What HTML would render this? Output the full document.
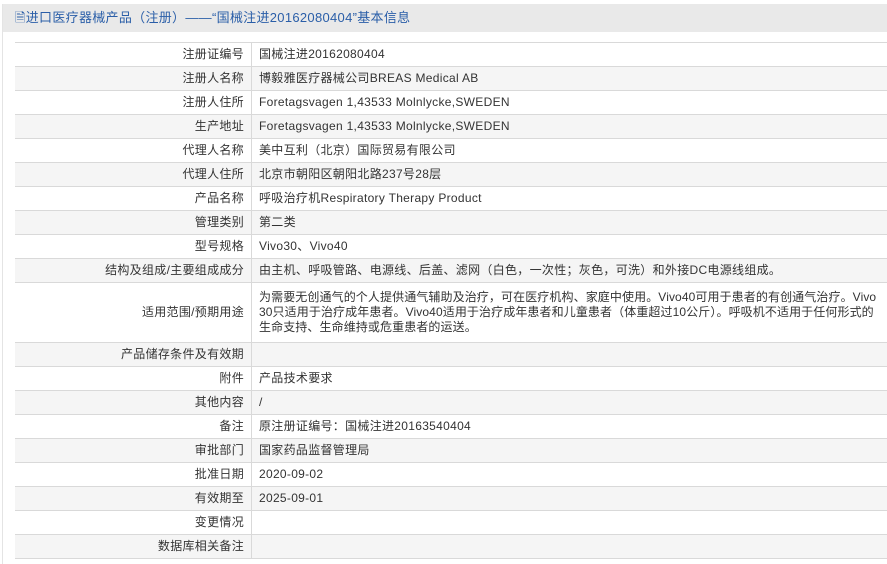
<!DOCTYPE html>
<html><head><meta charset="utf-8"><style>
body{margin:0;width:887px;height:558px;overflow:hidden;background:#fff;font-family:"Liberation Sans","Noto Sans CJK SC",sans-serif;font-size:12px;color:#333;letter-spacing:.3px}
.wrap{position:absolute;left:2px;top:4px;width:885px;height:560px;border-left:1px solid #e4e4e4;}
.hd{height:28px;background:#e9e9e9;line-height:28px;padding-left:12px;color:#2a5ea8;font-size:13px}
table{position:absolute;left:12px;top:38px;width:873px;border-collapse:collapse;table-layout:fixed}
td{border-top:1px solid #d9d9d9;border-bottom:1px solid #d9d9d9;height:23px;padding:0 7px;line-height:15px;white-space:nowrap;overflow:hidden}
td.l{width:222px;text-align:right;border-right:1px solid #d9d9d9}
tr:nth-child(even) td{background:#f5f5f5}
.t{letter-spacing:.1px}
</style></head><body><div class="wrap">
<div class="hd">🗎进口医疗器械产品（注册）——“国械注进20162080404”基本信息</div>
<table>
<tr><td class="l">注册证编号</td><td>国械注进20162080404</td></tr>
<tr><td class="l">注册人名称</td><td>博毅雅医疗器械公司BREAS Medical AB</td></tr>
<tr><td class="l">注册人住所</td><td>Foretagsvagen 1,43533 Molnlycke,SWEDEN</td></tr>
<tr><td class="l">生产地址</td><td>Foretagsvagen 1,43533 Molnlycke,SWEDEN</td></tr>
<tr><td class="l">代理人名称</td><td>美中互利（北京）国际贸易有限公司</td></tr>
<tr><td class="l">代理人住所</td><td>北京市朝阳区朝阳北路237号28层</td></tr>
<tr><td class="l">产品名称</td><td>呼吸治疗机Respiratory Therapy Product</td></tr>
<tr><td class="l">管理类别</td><td>第二类</td></tr>
<tr><td class="l">型号规格</td><td>Vivo30、Vivo40</td></tr>
<tr><td class="l">结构及组成/主要组成成分</td><td>由主机、呼吸管路、电源线、后盖、滤网（白色，一次性；灰色，可洗）和外接DC电源线组成。</td></tr>
<tr><td class="l" style="height:59px">适用范围/预期用途</td><td class="t" style="padding-top:2px;padding-bottom:2px">为需要无创通气的个人提供通气辅助及治疗，可在医疗机构、家庭中使用。Vivo40可用于患者的有创通气治疗。Vivo<br>30只适用于治疗成年患者。Vivo40适用于治疗成年患者和儿童患者（体重超过10公斤）。呼吸机不适用于任何形式的<br>生命支持、生命维持或危重患者的运送。</td></tr>
<tr><td class="l">产品储存条件及有效期</td><td></td></tr>
<tr><td class="l">附件</td><td>产品技术要求</td></tr>
<tr><td class="l">其他内容</td><td>/</td></tr>
<tr><td class="l">备注</td><td>原注册证编号：国械注进20163540404</td></tr>
<tr><td class="l">审批部门</td><td>国家药品监督管理局</td></tr>
<tr><td class="l">批准日期</td><td>2020-09-02</td></tr>
<tr><td class="l">有效期至</td><td>2025-09-01</td></tr>
<tr><td class="l">变更情况</td><td></td></tr>
<tr><td class="l">数据库相关备注</td><td></td></tr>
</table></div></body></html>
